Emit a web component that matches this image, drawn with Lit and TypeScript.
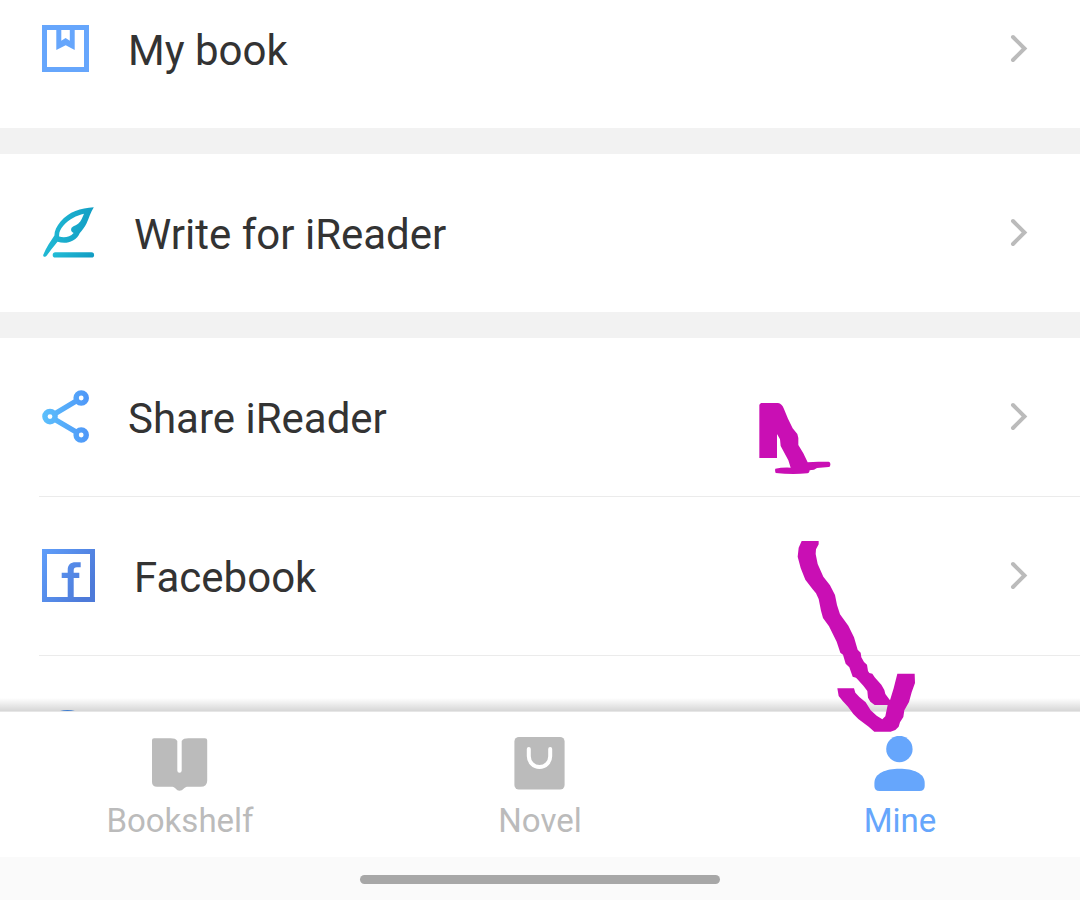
import { LitElement, html, css, svg, nothing, TemplateResult } from "lit";
import { customElement, property } from "lit/decorators.js";

const bookIcon = html`<svg width="47" height="47" viewBox="0 0 47 47" aria-hidden="true">
  <path fill="#66a6fc" fill-rule="evenodd"
    d="M0 0H47V47H0ZM5 5V42H42V5H32.7V25L23.7 20.3L14.3 25V5ZM19.3 5V15.8L23.6 13L27.8 15.8V5Z" />
</svg>`;

const featherIcon = html`<svg width="53" height="53" viewBox="0 0 53 53" aria-hidden="true">
  <defs>
    <linearGradient id="ink" x1="0" y1="0.4" x2="1" y2="0.6">
      <stop offset="0" stop-color="#22bcd6" />
      <stop offset="1" stop-color="#119bc2" />
    </linearGradient>
  </defs>
  <path fill="url(#ink)" fill-rule="evenodd"
    d="M51.8 1.2C48.5 6.5 47 12 44.5 17.5C43 20.7 40 24.5 37.8 27C36.5 30 34.5 32.5 31 34.5C26 37.4 20.5 37.4 15.5 35.7C11 41 7.5 46 4.6 49.8C3.5 51.4 .6 50.8 1.3 48.8C4.2 41.5 8.6 35.5 12.4 29.6C12.4 24.8 14.6 20.2 18.8 15.2C27 5.6 38.5 2.2 51.8 1.2ZM42 7.7C34.5 9.3 27 13.2 21.5 19.6C18 23.6 16.7 27.2 17.2 30.6C21.5 31.8 28 31.6 31.6 26.9C29.4 26 28.8 24.6 29.2 22.8C30 20.2 33.6 20 36.4 17.6C39.2 15 40.6 11 42 7.7Z" />
  <rect x="10.7" y="46.3" width="41.4" height="5.3" rx="2.6" fill="url(#ink)" />
</svg>`;

const shareIcon = html`<svg width="47" height="53" viewBox="0 0 47 53" aria-hidden="true">
  <defs>
    <linearGradient id="share" gradientUnits="userSpaceOnUse" x1="0" y1="0" x2="47" y2="0">
      <stop offset="0" stop-color="#5cc0fc" />
      <stop offset="1" stop-color="#4f97f8" />
    </linearGradient>
  </defs>
  <g fill="none" stroke="url(#share)" stroke-width="5.4">
    <circle cx="39.2" cy="8" r="5.1" />
    <circle cx="8" cy="26.6" r="5.1" />
    <circle cx="39.2" cy="45" r="5.1" />
    <path d="M12.5 24L34.6 10.8M12.5 29.2L34.6 42.3" />
  </g>
</svg>`;

const facebookIcon = html`<svg width="53" height="53" viewBox="0 0 53 53" aria-hidden="true">
  <defs>
    <linearGradient id="fb" x1="0" y1="0" x2="1" y2="0.6">
      <stop offset="0" stop-color="#5f9efa" />
      <stop offset="1" stop-color="#4d7ad9" />
    </linearGradient>
  </defs>
  <path fill="url(#fb)" fill-rule="evenodd"
    d="M0 0H53V53H0ZM5 5V48H25.7V29H19.7V23.7H25.7V21C25.7 15.7 28.7 13.3 33.5 13.3H38.7V18.3H35C32.6 18.3 31.7 19.4 31.7 21.5V23.7H37.3V29H31.7V48H48V5Z" />
</svg>`;

const roundIcon = html`<svg width="53" height="53" viewBox="0 0 53 53" aria-hidden="true">
  <circle cx="25.5" cy="28" r="23.5" fill="none" stroke="#4a94f6" stroke-width="5" />
</svg>`;

const shelfIcon = svg`<path
    d="M2 2.3H18.5C22 2.3 24.2 3 25.3 5V34.5A2.2 2.2 0 0 0 29.7 34.5V5C30.8 3 33 2.3 36.5 2.3H53Q55.2 2.3 55.2 4.3V44.7Q55.2 50.7 48.5 50.7H35C32.5 50.7 31 54.7 27.5 54.7C24.5 54.7 23 50.7 20.5 50.7H5Q0 50.7 0 46V4.3Q0 2.3 2 2.3Z" />`;

const novelIcon = svg`<rect x="2.4" y="1" width="50.2" height="52.6" rx="4.5" />
  <path d="M16.8 13V20.3A10.7 10.7 0 0 0 38.2 20.3V13" fill="none" stroke="#fff"
    stroke-width="4" stroke-linecap="round" />`;

const mineIcon = svg`<circle cx="27.4" cy="13" r="13.2" />
  <path d="M2.4 47C2.4 37 14 32.7 27.5 32.7S52.7 37 52.7 47V50Q52.7 55 47.5 55H7.5Q2.4 55 2.4 50Z" />`;

@customElement("menu-row")
class MenuRow extends LitElement {
  @property() label = "";
  @property({ attribute: false }) icon: TemplateResult | null = null;

  static styles = css`
    :host {
      display: block;
    }
    .row {
      display: flex;
      align-items: center;
      box-sizing: border-box;
      width: 100%;
      min-height: 158px;
      padding: 0 51px 2px 42px;
      gap: 39px;
      color: #333;
      text-decoration: none;
      font-size: 42px;
      line-height: 50px;
    }
    .label {
      flex: 1;
      padding-top: 6px;
    }
    svg {
      display: block;
      flex: none;
    }
  `;

  render() {
    return html`<a class="row" href="#">
      ${this.icon}
      <span class="label">${this.label}</span>
      <svg width="20" height="32" viewBox="0 0 20 32" aria-hidden="true">
        <path d="M4 5L15.5 16.5L4 28" fill="none" stroke="#bbb" stroke-width="4"
          stroke-linecap="round" />
      </svg>
    </a>`;
  }
}

@customElement("app-root")
class AppRoot extends LitElement {
  static styles = css`
    :host {
      display: flex;
      flex-direction: column;
      position: relative;
      height: 100vh;
      overflow: hidden;
      background: #fff;
      font-family: Roboto, "Noto Sans", sans-serif;
    }
    .list {
      display: flex;
      flex: 1;
      flex-direction: column;
      min-height: 0;
      overflow: hidden;
    }
    .group {
      flex: none;
    }
    .group + .group {
      border-top: 26px solid #f2f2f2;
    }
    .scrolled {
      margin-top: -30px;
    }
    .line {
      height: 1px;
      margin: 0 0 0 39px;
      border: 0;
      background: #ebebeb;
    }
    .tabs {
      display: grid;
      grid-template-columns: repeat(3, 1fr);
      flex: none;
      position: relative;
      padding: 24px 0 17px;
      border-top: 1px solid #e6e6e6;
      background: #fff;
    }
    .tabs::before {
      content: "";
      position: absolute;
      inset: -14px 0 auto;
      height: 13px;
      background: linear-gradient(rgba(0, 0, 0, 0), rgba(0, 0, 0, 0.16));
    }
    .tab {
      display: flex;
      flex-direction: column;
      align-items: center;
      gap: 10px;
      color: #bbb;
      font-size: 33px;
      line-height: 38px;
      text-decoration: none;
    }
    .tab svg {
      display: block;
      fill: currentColor;
    }
    .active {
      color: #66a6fc;
    }
    .gesture {
      display: flex;
      flex: none;
      justify-content: center;
      padding: 18px 0 16px;
      background: #fafafa;
    }
    .handle {
      width: 33.333%;
      height: 9px;
      border-radius: 5px;
      background: #a7a7a7;
    }
    .marker {
      position: absolute;
      inset: 0;
      width: 100%;
      height: 100%;
      pointer-events: none;
      fill: #c90fb4;
    }
  `;

  private tab(label: string, art: unknown, active = false) {
    return html`<a class="tab ${active ? "active" : ""}" href="#"
      aria-current=${active ? "page" : nothing}>
      <svg width="56" height="56" viewBox="0 0 56 56" aria-hidden="true">${art}</svg>
      <span>${label}</span>
    </a>`;
  }

  render() {
    return html`
      <main class="list">
        <section class="group scrolled">
          <menu-row label="My book" .icon=${bookIcon}></menu-row>
        </section>
        <section class="group">
          <menu-row label="Write for iReader" .icon=${featherIcon}></menu-row>
        </section>
        <section class="group">
          <menu-row label="Share iReader" .icon=${shareIcon}></menu-row>
          <hr class="line" />
          <menu-row label="Facebook" .icon=${facebookIcon}></menu-row>
          <hr class="line" />
          <menu-row .icon=${roundIcon}></menu-row>
        </section>
      </main>
      <nav class="tabs">
        ${this.tab("Bookshelf", shelfIcon)}
        ${this.tab("Novel", novelIcon)}
        ${this.tab("Mine", mineIcon, true)}
      </nav>
      <footer class="gesture"><div class="handle"></div></footer>
      <svg class="marker" viewBox="0 0 1080 900" aria-hidden="true">
        <g transform="translate(740 390) scale(0.33333)">
          <path d="M63 39H114Q126 41 131 55L144 86L158 115L172 132L175 144V165L190 190L203 217L235 215H266Q272 216 271 224Q271 231 266 231L231 234L222 239L209 241Q208 250 202 250Q155 254 107 249Q104 242 106 236Q125 232 152 233L145 211L122 168L120 148L111 132V204H58V44Z" />
        </g>
        <g transform="translate(780 530) scale(0.33333)">
          <path d="M65 33H116V43L108 58L107 72L113 102L130 140L150 166L165 195L171 225L180 253L205 287L222 322L233 359L242 368L244 382L252 396L261 404L264 423L268 429L277 431L284 442L304 464L313 480L316 492L330 511L341 475L352 431H404L405 459L395 487L387 516L373 541L370 561L360 577L356 590L346 600L332 605H283L266 590L235 567L220 552L204 530L188 513L176 498L172 475H222L226 488L238 501L257 517L272 541L290 557L307 568L316 559L323 525H284L271 515L264 503L262 483L250 467L231 446L228 443L218 440L208 412L197 401L189 374L181 368L170 335L147 289L129 264L123 242L116 207L108 190L98 178L76 149L62 114L53 80L56 53Z" />
        </g>
      </svg>
    `;
  }
}
